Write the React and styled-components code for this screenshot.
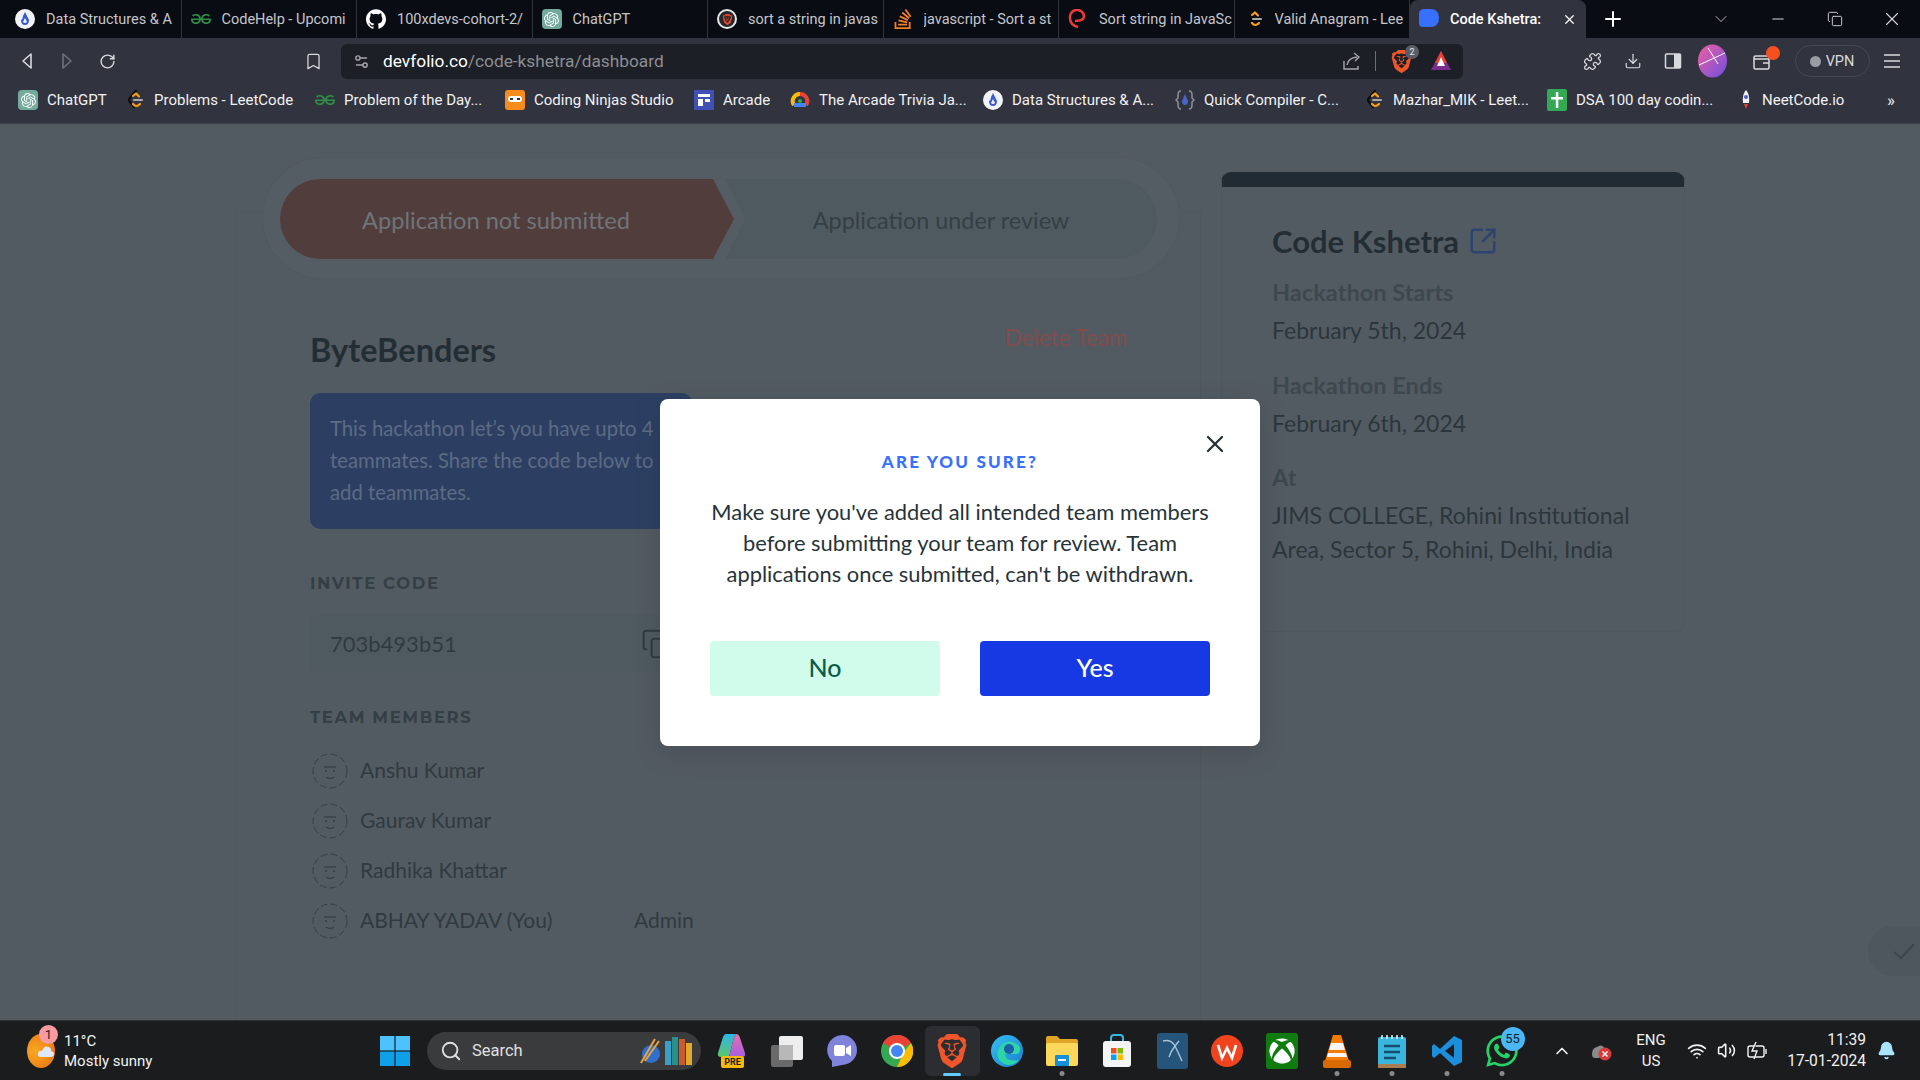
import React from 'react';
import styled, { createGlobalStyle } from 'styled-components';
import {
  Bell, Bookmark, ChevronDown, ChevronUp, Copy, Download, Minus, Plus, Puzzle, RotateCw,
  Search, Settings2, SquareArrowOutUpRight, Volume2, Wifi, X,
} from 'lucide-react';
import {
  SiBrave, SiGeeksforgeeks, SiGithub, SiOpenai, SiStackoverflow,
} from 'react-icons/si';
import { FaWhatsapp, FaXbox } from 'react-icons/fa';

const GlobalStyle = createGlobalStyle`
  html, body { margin: 0; padding: 0; height: 100%; overflow: hidden; }
  body { background: #535b62; font-family: "Lato", "Liberation Sans", sans-serif; }
  * { box-sizing: border-box; }
`;

const Screen = styled.div`
  width: 1920px;
  height: 1080px;
  display: flex;
  flex-direction: column;
  position: relative;
  overflow: hidden;
`;

/* browser chrome */
const TabStrip = styled.div`
  height: 38px;
  flex: none;
  display: flex;
  align-items: stretch;
  padding-left: 6px;
  background: #0a0c14;
  font-family: "Roboto", sans-serif;
  font-size: 14.5px;
`;

const Tab = styled.div`
  width: ${(p) => (p.$active ? 176 : 175.5)}px;
  flex: none;
  display: flex;
  align-items: center;
  gap: 11px;
  padding: 0 ${(p) => (p.$active ? 8 : 0)}px 0 9px;
  color: ${(p) => (p.$active ? '#fff' : '#c4c6cb')};
  background: ${(p) => (p.$active ? '#31343f' : 'transparent')};
  border-right: 1px solid ${(p) => (p.$active ? 'transparent' : '#33353d')};
  border-radius: ${(p) => (p.$active ? '8px 8px 0 0' : '0')};
  font-weight: ${(p) => (p.$active ? 500 : 400)};
`;

const TabTitle = styled.span`
  flex: 1;
  overflow: hidden;
  white-space: nowrap;
`;

const TabActions = styled.div`
  display: flex;
  align-items: center;
  color: #fff;
  margin-left: 15px;
`;

const WindowButtons = styled.div`
  display: flex;
  align-items: center;
  margin-left: auto;
  color: #d6d7da;
`;

const WindowButton = styled.div`
  width: 57px;
  display: flex;
  justify-content: center;
`;

const Toolbar = styled.div`
  height: 46px;
  flex: none;
  display: flex;
  align-items: center;
  padding-left: 7px;
  background: #31343f;
  color: #d8d9dc;
`;

const ToolButton = styled.div`
  width: 40px;
  height: 36px;
  flex: none;
  position: relative;
  display: flex;
  align-items: center;
  justify-content: center;
  color: ${(p) => (p.$dim ? '#6f727b' : 'inherit')};
  margin-left: ${(p) => p.$gap || 0}px;
`;

const AddressBar = styled.div`
  width: 1122px;
  height: 35px;
  flex: none;
  margin-left: 8px;
  padding: 0 2px 0 12px;
  display: flex;
  align-items: center;
  border-radius: 6px;
  background: #1d1f26;
  color: #a5a7ad;
`;

const Url = styled.div`
  flex: 1;
  margin-left: 13px;
  font-family: "Roboto", sans-serif;
  font-size: 17.3px;
  color: #8c8e94;
  b { color: #fff; font-weight: 400; }
`;

const Divider = styled.div`
  width: 1px;
  height: 20px;
  background: #6c6e76;
  margin: 0 5px 0 3px;
`;

const CountBadge = styled.span`
  position: absolute;
  top: 2px;
  right: 2px;
  width: 14px;
  height: 14px;
  border-radius: 50%;
  background: #5b5d66;
  color: #e7e7e7;
  font-family: "Roboto", sans-serif;
  font-size: 9px;
  text-align: center;
  line-height: 14px;
`;

const NotifyDot = styled.span`
  position: absolute;
  top: 3px;
  right: 2px;
  width: 14px;
  height: 14px;
  border-radius: 50%;
  background: #f4511e;
`;

const VpnPill = styled.div`
  width: 75px;
  height: 32px;
  flex: none;
  margin-left: 13px;
  border-radius: 16px;
  border: 1px solid #454852;
  display: flex;
  align-items: center;
  justify-content: center;
  gap: 5px;
  font-family: "Roboto", sans-serif;
  font-size: 14.5px;
  color: #d8d9dc;
`;

const VpnDot = styled.span`
  width: 11px;
  height: 11px;
  border-radius: 50%;
  background: #9a9ca4;
`;

const BookmarkBar = styled.div`
  height: 40px;
  flex: none;
  display: flex;
  align-items: center;
  padding: 0 0 7px 18px;
  background: #31343f;
  border-bottom: 1px solid #3e414b;
  font-family: "Roboto", sans-serif;
  font-size: 15px;
  color: #f1f1f3;
`;

const BookmarkItem = styled.div`
  width: ${(p) => p.$width}px;
  flex: none;
  display: flex;
  align-items: center;
  gap: 9px;
  white-space: nowrap;
`;

const MoreMarks = styled.div`
  margin-left: 28px;
  font-size: 17px;
`;

/* favicons */
const Fav = styled.div`
  width: ${(p) => p.$size || 20}px;
  height: ${(p) => p.$size || 20}px;
  flex: none;
  display: flex;
  align-items: center;
  justify-content: center;
  font-size: ${(p) => p.$size || 20}px;
  color: ${(p) => p.$color || 'inherit'};
`;

const RingFav = styled(Fav)`
  border: 2px solid #e6e6e6;
  border-radius: 50%;
  background: #26272c;
  font-size: 11px;
`;

const GptTile = styled.div`
  width: 20px;
  height: 20px;
  flex: none;
  border-radius: 4px;
  background: #74aa9c;
  color: #fff;
  display: flex;
  align-items: center;
  justify-content: center;
  font-size: 15px;
`;

const DsaIcon = () => (
  <svg width="20" height="20" viewBox="0 0 20 20">
    <circle cx="10" cy="10" r="10" fill="#f2f3f8" />
    <path d="M10 3 L14 11 Q14 16 10 16 Q6 16 6 11 Q8 10 8 7 Z" fill="#3a5bd0" />
    <path d="M10 9 L12 13 Q10 15 8 13 Z" fill="#f2f3f8" />
  </svg>
);

const LeetIcon = () => (
  <svg width="20" height="22" viewBox="0 0 20 22" fill="none" strokeLinecap="round">
    <path d="M11 2 L5 9 Q3 11 5 13 L9 18" stroke="#0c0c0c" strokeWidth="2.2" />
    <path d="M8 7 L11 4.5 M14 7.5 L11.5 5" stroke="#f89f1b" strokeWidth="2.2" />
    <path d="M9 11 H17" stroke="#a8a8a8" strokeWidth="2.2" />
    <path d="M8 15 Q11 19 15 15" stroke="#f89f1b" strokeWidth="2.2" />
  </svg>
);

const NinjaIcon = () => (
  <svg width="20" height="20" viewBox="0 0 20 20">
    <rect width="20" height="20" rx="3" fill="#f78c1e" />
    <rect x="3" y="6" width="14" height="6" rx="3" fill="#fff" />
    <rect x="5" y="8" width="3" height="2" fill="#333" />
    <rect x="12" y="8" width="3" height="2" fill="#333" />
  </svg>
);

const ArcadeIcon = () => (
  <svg width="20" height="20" viewBox="0 0 20 20">
    <rect width="20" height="20" fill="#3f51b5" />
    <rect x="4" y="4" width="12" height="3" fill="#fff" />
    <rect x="4" y="9" width="5" height="7" fill="#fff" />
    <rect x="11" y="9" width="5" height="3" fill="#fff" />
  </svg>
);

const TriviaIcon = () => (
  <svg width="20" height="20" viewBox="0 0 20 20" fill="none" strokeWidth="4">
    <path d="M4 15 A7 7 0 0 1 10 4" stroke="#fbbc04" />
    <path d="M10 4 A7 7 0 0 1 16 15" stroke="#ea4335" />
    <path d="M4 15 L16 15" stroke="#4285f4" />
    <circle cx="10" cy="11" r="2" fill="#34a853" stroke="none" />
  </svg>
);

const QuickIcon = () => (
  <svg width="20" height="22" viewBox="0 0 20 22" fill="none" stroke="#8c8fa0" strokeWidth="1.5">
    <path d="M6 2 Q3 2 3 6 V9 L1 11 L3 13 V16 Q3 20 6 20" />
    <path d="M14 2 Q17 2 17 6 V9 L19 11 L17 13 V16 Q17 20 14 20" />
    <path d="M10 5 L13 12 Q13 16 10 16 Q7 16 7 12 Z" fill="#4a63c8" stroke="none" />
  </svg>
);

const SheetIcon = () => (
  <svg width="20" height="22" viewBox="0 0 20 22">
    <rect width="20" height="22" rx="2" fill="#34a853" />
    <rect x="4" y="8" width="12" height="2.5" fill="#fff" />
    <rect x="8.8" y="3" width="2.5" height="16" fill="#fff" />
  </svg>
);

const RocketIcon = () => (
  <svg width="14" height="22" viewBox="0 0 14 22">
    <path d="M7 1 Q11 5 10 14 H4 Q3 5 7 1 Z" fill="#f1f1f3" />
    <circle cx="7" cy="8" r="2" fill="#4a63c8" />
    <path d="M5 15 H9 L7 20 Z" fill="#ea4335" />
  </svg>
);

const CodeKshetraIcon = () => (
  <svg width="20" height="22" viewBox="0 0 20 22">
    <path d="M0 6 Q0 1 6 1 H11 Q20 1 20 10 Q20 19 11 19 H4 Q0 19 0 15 Z" fill="#3770ff" />
  </svg>
);

const CodeforSpinner = () => (
  <svg width="20" height="20" viewBox="0 0 20 20" fill="none" stroke="#ef3b36" strokeWidth="2.5">
    <path d="M10 18 Q2 16 2 9 A7 7 0 0 1 16 7 Q16 12 7 12" />
  </svg>
);

const BackIcon = ({ flip }) => (
  <svg width="16" height="20" viewBox="0 0 16 20" fill="none" stroke="currentColor" strokeWidth="1.6" strokeLinejoin="round">
    <path d={flip ? 'M4 3 L12 10 L4 17 Z' : 'M12 3 L4 10 L12 17 Z'} />
  </svg>
);

const ShareIcon = () => (
  <svg width="20" height="20" viewBox="0 0 20 20" fill="none" stroke="currentColor" strokeWidth="1.4">
    <path d="M2 10 V18 H16 V15" />
    <path d="M5 14 Q6 7 15 6" />
    <path d="M12 2 L17 6 L13 10" />
  </svg>
);

const SidePanelIcon = () => (
  <svg width="18" height="18" viewBox="0 0 18 18">
    <rect x="1.5" y="2" width="15" height="14" rx="1" fill="none" stroke="currentColor" strokeWidth="1.5" />
    <rect x="10" y="2" width="6.5" height="14" fill="currentColor" />
  </svg>
);

const AccountIcon = () => (
  <svg width="29" height="34" viewBox="0 0 29 34">
    <defs>
      <linearGradient id="acc" x1="0" y1="0" x2="1" y2="1">
        <stop offset="0" stopColor="#f05fa0" />
        <stop offset="1" stopColor="#6f4fe0" />
      </linearGradient>
    </defs>
    <ellipse cx="14.5" cy="17" rx="14.5" ry="16.5" fill="url(#acc)" />
    <path d="M1 21 L27 9 M10 4 L20 20" stroke="#fff" strokeWidth="1" />
  </svg>
);

const WalletIcon = () => (
  <svg width="20" height="20" viewBox="0 0 20 20" fill="none" stroke="currentColor" strokeWidth="1.5">
    <rect x="2" y="5" width="15" height="13" rx="1.5" />
    <path d="M2 8 H17 M11 12 H17" />
  </svg>
);

const MenuIcon = () => (
  <svg width="18" height="16" viewBox="0 0 18 16" stroke="currentColor" strokeWidth="1.6">
    <path d="M1 2 H17 M1 8 H17 M1 14 H17" />
  </svg>
);

const BatTriangle = () => (
  <svg width="22" height="22" viewBox="0 0 22 22">
    <path d="M11 1 L21 20 H1 Z" fill="#7b2d8b" />
    <path d="M11 1 L17 13 H5 Z" fill="#e8412e" />
    <path d="M11 7 L15 16 H7 Z" fill="#fff" />
  </svg>
);

/* page behind the modal */
const Page = styled.main`
  flex: 1;
  min-height: 0;
  background: #535b62;
  display: flex;
  padding-left: 235px;
  align-items: flex-start;
`;

const LeftPanel = styled.section`
  width: 966px;
  height: 808px;
  flex: none;
  margin-top: 88px;
  padding-left: 27px;
  border: 1px solid #4f585e;
  border-bottom: none;
`;

const StepperShell = styled.div`
  width: 916px;
  height: 120px;
  margin-top: -55px;
  padding: 21px 21px 0 17px;
  display: flex;
  align-items: flex-start;
  border-radius: 60px;
  background: #555d64;
  box-shadow: 0 0 0 1px #51595f;
`;

const StepOne = styled.div`
  width: 454px;
  height: 80px;
  flex: none;
  display: flex;
  align-items: center;
  justify-content: center;
  padding: 2px 22px 0 0;
  border-radius: 40px 0 0 40px;
  background: #513e3c;
  color: #6f7479;
  font-size: 23.6px;
  clip-path: polygon(0 0, 433px 0, 100% 50%, 433px 100%, 0 100%);
`;

const StepTwo = styled.div`
  width: 432px;
  height: 80px;
  flex: none;
  margin-left: -9px;
  padding-top: 2px;
  display: flex;
  align-items: center;
  justify-content: center;
  border-radius: 0 40px 40px 0;
  background: #4f5a60;
  color: #343f45;
  font-size: 23.4px;
  clip-path: polygon(0 0, 100% 0, 100% 100%, 0 100%, 20px 50%);
`;

const TeamBlock = styled.div`
  width: 817px;
  margin-left: 47px;
  margin-top: 37px;
`;

const TeamHeader = styled.div`
  display: flex;
  justify-content: space-between;
  align-items: flex-start;
  height: 78px;
`;

const TeamName = styled.h1`
  margin: 15px 0 0;
  font-size: 32.5px;
  line-height: 40px;
  font-weight: 700;
  color: #232e34;
`;

const DeleteLink = styled.div`
  margin-top: 9px;
  font-size: 22.4px;
  line-height: 28px;
  color: #804c4c;
`;

const InfoBox = styled.div`
  width: 382px;
  height: 136px;
  padding: 19px 20px;
  border-radius: 10px;
  background: #2c3f63;
  color: #5d6b83;
  font-size: 20.3px;
  line-height: 32px;
`;

const SectionLabel = styled.div`
  margin-top: ${(p) => p.$top}px;
  font-family: "Montserrat", "Open Sans", sans-serif;
  font-size: 16.5px;
  line-height: 20px;
  font-weight: 700;
  letter-spacing: 1.6px;
  color: #343f45;
`;

const CodeBox = styled.div`
  width: 382px;
  height: 57px;
  margin-top: 22px;
  padding-left: 20px;
  padding-right: 19px;
  display: flex;
  align-items: center;
  justify-content: space-between;
  border-radius: 6px;
  background: #4f5a60;
  color: #2f3a40;
  font-size: 22px;
`;

const MemberList = styled.ul`
  list-style: none;
  margin: 19px 0 0;
  padding: 0;
`;

const Member = styled.li`
  height: 50px;
  display: flex;
  align-items: center;
  color: #2f3a40;
  font-size: 21px;
`;

const MemberName = styled.span`
  width: 274px;
  margin-left: 12px;
  padding-bottom: 3px;
  white-space: nowrap;
`;

const AdminTag = styled.span`
  padding-bottom: 3px;
`;

const AvatarFace = styled.svg`
  margin-left: 2px;
  flex: none;
`;

const Avatar = () => (
  <AvatarFace width="36" height="36" viewBox="0 0 36 36" fill="none" stroke="#343f45">
    <circle cx="18" cy="18" r="17" strokeDasharray="7 3" strokeWidth="1" />
    <path d="M12 14 H24" strokeWidth="1.2" />
    <path d="M13 18 H15 M21 18 H23" strokeWidth="1.6" />
    <path d="M14 24 Q18 27 22 24" strokeWidth="1.2" />
  </AvatarFace>
);

const EventCard = styled.aside`
  width: 464px;
  height: 460px;
  flex: none;
  margin-top: 48px;
  margin-left: 20px;
  padding: 36px 50px 0;
  border: 1px solid #4f585e;
  border-top: 15px solid #212b33;
  border-radius: 10px;
  background: #535b62;
`;

const EventTitle = styled.h2`
  margin: 0;
  display: flex;
  align-items: center;
  gap: 9px;
  font-size: 31px;
  line-height: 36px;
  font-weight: 700;
  color: #232e34;
  svg { color: #2c4570; }
`;

const EventLabel = styled.div`
  margin-top: ${(p) => p.$top}px;
  font-size: 23.6px;
  line-height: 28px;
  font-weight: 700;
  color: #3d484e;
`;

const EventValue = styled.div`
  margin-top: 7px;
  font-size: 23px;
  line-height: 34px;
  color: #2b363c;
`;

const CheckPill = styled.div`
  position: absolute;
  right: 0;
  top: 926px;
  width: 52px;
  height: 50px;
  padding-left: 24px;
  display: flex;
  align-items: center;
  border-radius: 25px 0 0 25px;
  background: #4d575d;
  color: #3b464c;
`;

/* modal */
const Modal = styled.div`
  position: absolute;
  left: 660px;
  top: 399px;
  width: 600px;
  height: 347px;
  padding: 52px 50px 0;
  border-radius: 8px;
  background: #fff;
  box-shadow: 0 6px 24px rgba(40, 46, 52, 0.25);
  display: flex;
  flex-direction: column;
  align-items: center;
`;

const CloseButton = styled.div`
  position: absolute;
  top: 31px;
  right: 31px;
  color: #273339;
  display: flex;
`;

const ModalTitle = styled.div`
  font-size: 17px;
  line-height: 22px;
  font-weight: 900;
  letter-spacing: 2.2px;
  color: #3770ff;
`;

const ModalBody = styled.p`
  margin: 23px 0 0;
  width: 520px;
  text-align: center;
  font-size: 21.9px;
  line-height: 31px;
  color: #273339;
`;

const ModalActions = styled.div`
  width: 500px;
  margin-top: 52px;
  display: flex;
  justify-content: space-between;
`;

const ModalButton = styled.button`
  width: 230px;
  height: 55px;
  padding: 0 0 4px;
  border: none;
  border-radius: 4px;
  font-family: inherit;
  font-size: 25px;
  font-weight: 500;
  background: ${(p) => (p.$primary ? '#1639e4' : '#d1fcec')};
  color: ${(p) => (p.$primary ? '#fff' : '#0a5c4a')};
`;

/* taskbar */
const Taskbar = styled.footer`
  height: 60px;
  flex: none;
  display: flex;
  align-items: center;
  background: #1b1c1e;
  border-top: 1px solid #2f3134;
  font-family: "Roboto", sans-serif;
  color: #f2f2f2;
`;

const Weather = styled.div`
  width: 367px;
  flex: none;
  padding-left: 27px;
  display: flex;
  align-items: center;
  gap: 9px;
  font-size: 15px;
  line-height: 20px;
`;

const WeatherIcon = styled.div`
  width: 28px;
  height: 34px;
  position: relative;
  flex: none;
  border-radius: 50%;
  background: radial-gradient(circle at 30% 50%, #f9a825, #e8710a);
  display: flex;
  align-items: center;
  justify-content: flex-end;
`;

const WeatherBadge = styled.span`
  position: absolute;
  top: -9px;
  left: 12px;
  width: 19px;
  height: 19px;
  border-radius: 50%;
  background: #f99aa2;
  color: #222;
  font-size: 13px;
  line-height: 19px;
  text-align: center;
`;

const SearchPill = styled.div`
  width: 274px;
  height: 38px;
  flex: none;
  margin: 0 3.5px 0 5px;
  padding: 0 6px 0 13px;
  display: flex;
  align-items: center;
  gap: 10px;
  border-radius: 19px;
  background: #3a3b3d;
  color: #e0e0e0;
  font-size: 16.5px;
`;

const SearchArt = styled.div`
  margin-left: auto;
  display: flex;
`;

const AppSlot = styled.div`
  width: 55px;
  height: 50px;
  flex: none;
  position: relative;
  display: flex;
  align-items: center;
  justify-content: center;
  border-radius: 6px;
  background: ${(p) => (p.$active ? '#2c2d30' : 'transparent')};
  font-size: 32px;
`;

const RunDot = styled.span`
  position: absolute;
  bottom: 0;
  left: 50%;
  height: ${(p) => (p.$active ? 3 : 5)}px;
  width: ${(p) => (p.$active ? 18 : 5)}px;
  transform: translateX(-50%);
  border-radius: 3px;
  background: ${(p) => (p.$active ? '#60cdff' : '#8a8a8a')};
`;

const AppBadge = styled.span`
  position: absolute;
  top: 1px;
  right: 5px;
  width: 24px;
  height: 24px;
  border-radius: 50%;
  background: #4bb8f5;
  color: #10222e;
  font-size: 13px;
  line-height: 24px;
  text-align: center;
`;

const Tray = styled.div`
  margin-left: auto;
  padding-right: 14px;
  display: flex;
  align-items: center;
  color: #f2f2f2;
`;

const TraySlot = styled.div`
  width: ${(p) => p.$width}px;
  display: flex;
  justify-content: center;
  text-align: center;
  font-size: 15px;
  line-height: 21px;
`;

const Clock = styled.div`
  width: 92px;
  text-align: right;
  font-size: 15.6px;
  line-height: 21px;
`;

const StartIcon = () => (
  <svg width="30" height="30" viewBox="0 0 30 30">
    <rect width="14.4" height="14.4" fill="#4cc2ff" />
    <rect x="15.6" width="14.4" height="14.4" fill="#4cc2ff" />
    <rect y="15.6" width="14.4" height="14.4" fill="#0fa0e8" />
    <rect x="15.6" y="15.6" width="14.4" height="14.4" fill="#0fa0e8" />
  </svg>
);

const CloudIcon = () => (
  <svg width="18" height="14" viewBox="0 0 18 14">
    <path d="M4 13 Q0 13 1 9 Q2 6 5 7 Q7 1 12 3 Q15 5 14 7 Q18 8 17 11 Q16 13 14 13 Z" fill="#dfe9f5" />
  </svg>
);

const BooksIcon = () => (
  <svg width="58" height="32" viewBox="0 0 58 32">
    <circle cx="14" cy="19" r="9" fill="#2f6fd0" />
    <path d="M4 28 L18 4" stroke="#e8a33d" strokeWidth="2" />
    <path d="M8 26 L22 6" stroke="#e8a33d" strokeWidth="2" />
    <rect x="28" y="6" width="6" height="24" fill="#3aa0c8" />
    <rect x="35" y="2" width="6" height="28" fill="#2d8f8a" />
    <rect x="42" y="4" width="6" height="26" fill="#c95c2e" />
    <rect x="49" y="8" width="6" height="22" fill="#e0a92e" />
  </svg>
);

const CopilotIcon = () => (
  <svg width="34" height="36" viewBox="0 0 34 36">
    <defs>
      <linearGradient id="cpA" x1="0" y1="0" x2="0" y2="1">
        <stop offset="0" stopColor="#2fb5e8" />
        <stop offset="1" stopColor="#5cc56a" />
      </linearGradient>
      <linearGradient id="cpB" x1="0" y1="0" x2="0" y2="1">
        <stop offset="0" stopColor="#e86fb0" />
        <stop offset="1" stopColor="#a45fe0" />
      </linearGradient>
    </defs>
    <path d="M11 1 H21 Q18 6 17 12 L14 24 H6 Q2 24 3 20 L8 4 Q9 1 11 1 Z" fill="url(#cpA)" />
    <path d="M21 1 Q24 1 25 5 L30 20 Q31 24 27 24 H14 L17 12 Q18 6 21 1 Z" fill="url(#cpB)" />
    <rect x="6" y="23" width="23" height="12" rx="2" fill="#f6b90c" />
    <text x="17.5" y="32" fontSize="9" fontWeight="700" textAnchor="middle" fill="#222" fontFamily="Roboto">PRE</text>
  </svg>
);

const FilesIcon = () => (
  <svg width="32" height="32" viewBox="0 0 32 32">
    <rect y="10" width="22" height="22" rx="2" fill="#6a6a6a" />
    <rect x="8" y="1" width="24" height="24" rx="2" fill="#eeeeee" />
    <rect x="8" y="10" width="14" height="15" fill="#b8b8b8" />
  </svg>
);

const MeetIcon = () => (
  <svg width="32" height="34" viewBox="0 0 32 34">
    <path d="M16 1 A15 15 0 1 1 16 31 L6 33 L6 27 A15 15 0 0 1 16 1 Z" fill="#7f83dc" />
    <rect x="8" y="11" width="11" height="11" rx="2" fill="#fff" />
    <path d="M20 14 L25 11 V22 L20 19 Z" fill="#fff" />
  </svg>
);

const ChromeIcon = () => (
  <svg width="32" height="32" viewBox="0 0 32 32">
    <circle cx="16" cy="16" r="16" fill="#34a853" />
    <path d="M16 0 A16 16 0 0 1 30 8 L16 16 L2 8 A16 16 0 0 1 16 0 Z" fill="#ea4335" />
    <path d="M30 8 A16 16 0 0 1 16 32 L23 17 Z" fill="#fbbc04" />
    <circle cx="16" cy="16" r="8" fill="#fff" />
    <circle cx="16" cy="16" r="6" fill="#4285f4" />
  </svg>
);

const EdgeIcon = () => (
  <svg width="32" height="34" viewBox="0 0 32 34">
    <defs>
      <linearGradient id="ed" x1="0" y1="0" x2="1" y2="1">
        <stop offset="0" stopColor="#35c1f1" />
        <stop offset="1" stopColor="#1b7fcf" />
      </linearGradient>
    </defs>
    <circle cx="16" cy="17" r="16" fill="url(#ed)" />
    <path d="M8 14 Q16 2 28 12 Q31 18 26 20 H14 Q14 28 28 26 Q18 36 8 26 Q5 20 8 14 Z" fill="#2fd4a7" />
    <circle cx="18" cy="15" r="5" fill="#1b5fa8" />
  </svg>
);

const FolderIcon = () => (
  <svg width="34" height="32" viewBox="0 0 34 32">
    <path d="M1 3 Q1 1 3 1 H12 L15 4 H31 Q33 4 33 6 V10 H1 Z" fill="#e0a526" />
    <rect x="1" y="8" width="32" height="23" rx="2" fill="#fbd75b" />
    <rect x="10" y="20" width="14" height="11" rx="1" fill="#1490d8" />
    <rect x="13" y="24" width="8" height="2" fill="#e9f6ff" />
  </svg>
);

const StoreIcon = () => (
  <svg width="30" height="34" viewBox="0 0 30 34">
    <path d="M9 8 V4 Q9 1 12 1 H18 Q21 1 21 4 V8" fill="none" stroke="#35b8e8" strokeWidth="2" />
    <rect x="1" y="7" width="28" height="26" rx="3" fill="#f4f4f4" />
    <rect x="9" y="14" width="5.5" height="5.5" fill="#f25022" />
    <rect x="15.5" y="14" width="5.5" height="5.5" fill="#7fba00" />
    <rect x="9" y="20.5" width="5.5" height="5.5" fill="#00a4ef" />
    <rect x="15.5" y="20.5" width="5.5" height="5.5" fill="#ffb900" />
  </svg>
);

const MysqlIcon = () => (
  <svg width="31" height="36" viewBox="0 0 31 36">
    <rect width="31" height="36" rx="3" fill="#26557c" />
    <path d="M6 8 Q14 6 18 13 Q21 19 25 28 M18 13 Q14 18 12 24 M18 13 L22 8" fill="none" stroke="#a9c4d8" strokeWidth="1.4" />
  </svg>
);

const WpsIcon = () => (
  <svg width="32" height="32" viewBox="0 0 32 32">
    <circle cx="16" cy="16" r="16" fill="#f0431e" />
    <path d="M7 10 L11 23 L16 13 L21 23 L25 10" fill="none" stroke="#fff" strokeWidth="2.6" />
  </svg>
);

const XboxTile = styled.div`
  width: 32px;
  height: 36px;
  border-radius: 3px;
  background: #107c10;
  color: #fff;
  display: flex;
  align-items: center;
  justify-content: center;
  font-size: 26px;
`;

const VlcIcon = () => (
  <svg width="30" height="36" viewBox="0 0 30 36">
    <path d="M11 2 H19 L27 28 H3 Z" fill="#f57c00" />
    <path d="M9 10 H21 L23 17 H7 Z" fill="#f5f5f5" />
    <path d="M6 20 H24 L25 24 H5 Z" fill="#f5f5f5" />
    <rect x="1" y="27" width="28" height="8" rx="2" fill="#d96a00" />
  </svg>
);

const NotepadIcon = () => (
  <svg width="28" height="34" viewBox="0 0 28 34">
    <rect y="3" width="28" height="31" rx="2" fill="#3ab6de" />
    <path d="M4 1 V5 M9 1 V5 M14 1 V5 M19 1 V5 M24 1 V5" stroke="#d8eef6" strokeWidth="1.6" />
    <path d="M6 12 H22 M6 18 H22 M6 24 H18" stroke="#14506b" strokeWidth="2.4" />
    <rect y="30" width="28" height="4" fill="#a97d4d" />
  </svg>
);

const VscodeIcon = () => (
  <svg width="32" height="32" viewBox="0 0 32 32">
    <path d="M23 1 L31 5 V27 L23 31 L9 18 L3 23 L1 21 V11 L3 9 L9 14 Z M23 9 L14 16 L23 23 Z" fill="#1b8fdc" fillRule="evenodd" />
  </svg>
);

const CloudOff = () => (
  <svg width="24" height="22" viewBox="0 0 24 22">
    <path d="M3 14 Q3 8 8 7 Q13 3 16 9 Q14 16 10 18 H6 Q3 18 3 14 Z" fill="#8a8a8a" />
    <circle cx="16" cy="14" r="6.5" fill="#d83b3b" />
    <path d="M13.5 11.5 L18.5 16.5 M18.5 11.5 L13.5 16.5" stroke="#fff" strokeWidth="1.4" />
  </svg>
);

const BatteryIcon = () => (
  <svg width="22" height="20" viewBox="0 0 22 20" fill="none" stroke="currentColor" strokeWidth="1.4">
    <rect x="2" y="5" width="16" height="11" rx="2" />
    <path d="M20 8 V13" />
    <path d="M10 1 L6 10 H11 L8 18" fill="#1b1c1e" />
  </svg>
);

const tabs = [
  { title: 'Data Structures & A', icon: <DsaIcon /> },
  { title: 'CodeHelp - Upcomi', icon: <Fav $color="#2f8d46"><SiGeeksforgeeks /></Fav> },
  { title: '100xdevs-cohort-2/', icon: <Fav $color="#fff"><SiGithub /></Fav> },
  { title: 'ChatGPT', icon: <GptTile><SiOpenai /></GptTile> },
  { title: 'sort a string in javas', icon: <RingFav $color="#e0492e"><SiBrave /></RingFav> },
  { title: 'javascript - Sort a st', icon: <Fav $color="#f48024"><SiStackoverflow /></Fav> },
  { title: 'Sort string in JavaSc', icon: <CodeforSpinner /> },
  { title: 'Valid Anagram - Lee', icon: <LeetIcon /> },
];

const marks = [
  { label: 'ChatGPT', width: 107, icon: <GptTile><SiOpenai /></GptTile> },
  { label: 'Problems - LeetCode', width: 190, icon: <LeetIcon /> },
  { label: 'Problem of the Day...', width: 190, icon: <Fav $color="#2f8d46"><SiGeeksforgeeks /></Fav> },
  { label: 'Coding Ninjas Studio', width: 189, icon: <NinjaIcon /> },
  { label: 'Arcade', width: 96, icon: <ArcadeIcon /> },
  { label: 'The Arcade Trivia Ja...', width: 193, icon: <TriviaIcon /> },
  { label: 'Data Structures & A...', width: 192, icon: <DsaIcon /> },
  { label: 'Quick Compiler - C...', width: 189, icon: <QuickIcon /> },
  { label: 'Mazhar_MIK - Leet...', width: 183, icon: <LeetIcon /> },
  { label: 'DSA 100 day codin...', width: 192, icon: <SheetIcon /> },
  { label: 'NeetCode.io', width: 120, icon: <RocketIcon /> },
];

const members = ['Anshu Kumar', 'Gaurav Kumar', 'Radhika Khattar', 'ABHAY YADAV (You)'];

const apps = [
  { id: 'copilot', icon: <CopilotIcon /> },
  { id: 'files', icon: <FilesIcon /> },
  { id: 'meet', icon: <MeetIcon /> },
  { id: 'chrome', icon: <ChromeIcon /> },
  { id: 'brave', icon: <Fav $size={34} $color="#f0552b"><SiBrave /></Fav>, active: true },
  { id: 'edge', icon: <EdgeIcon /> },
  { id: 'folder', icon: <FolderIcon />, running: true },
  { id: 'store', icon: <StoreIcon /> },
  { id: 'mysql', icon: <MysqlIcon /> },
  { id: 'wps', icon: <WpsIcon /> },
  { id: 'xbox', icon: <XboxTile><FaXbox /></XboxTile> },
  { id: 'vlc', icon: <VlcIcon />, running: true },
  { id: 'notepad', icon: <NotepadIcon />, running: true },
  { id: 'vscode', icon: <VscodeIcon />, running: true },
  { id: 'whatsapp', icon: <Fav $size={36} $color="#25d366"><FaWhatsapp /></Fav>, running: true, badge: '55' },
];

const App = () => (
  <Screen>
    <GlobalStyle />
    <TabStrip>
      {tabs.map((tab) => (
        <Tab key={tab.title}>
          {tab.icon}
          <TabTitle>{tab.title}</TabTitle>
        </Tab>
      ))}
      <Tab $active>
        <CodeKshetraIcon />
        <TabTitle>Code Kshetra:</TabTitle>
        <X size={15} />
      </Tab>
      <TabActions><Plus size={24} /></TabActions>
      <WindowButtons>
        <WindowButton><ChevronDown size={20} strokeWidth={1} /></WindowButton>
        <WindowButton><Minus size={18} strokeWidth={1.4} /></WindowButton>
        <WindowButton><Copy size={16} strokeWidth={1.4} /></WindowButton>
        <WindowButton><X size={22} strokeWidth={1.2} /></WindowButton>
      </WindowButtons>
    </TabStrip>

    <Toolbar>
      <ToolButton><BackIcon /></ToolButton>
      <ToolButton $dim><BackIcon flip /></ToolButton>
      <ToolButton><RotateCw size={17} /></ToolButton>
      <ToolButton $gap={166}><Bookmark size={19} strokeWidth={1.6} /></ToolButton>
      <AddressBar>
        <Settings2 size={17} />
        <Url><b>devfolio.co</b>/code-kshetra/dashboard</Url>
        <ToolButton><ShareIcon /></ToolButton>
        <Divider />
        <ToolButton>
          <Fav $size={23} $color="#f0552b"><SiBrave /></Fav>
          <CountBadge>2</CountBadge>
        </ToolButton>
        <ToolButton><BatTriangle /></ToolButton>
      </AddressBar>
      <ToolButton $gap={109.5}><Puzzle size={19} strokeWidth={1.6} /></ToolButton>
      <ToolButton><Download size={18} strokeWidth={1.6} /></ToolButton>
      <ToolButton><SidePanelIcon /></ToolButton>
      <ToolButton><AccountIcon /></ToolButton>
      <ToolButton $gap={9}>
        <WalletIcon />
        <NotifyDot />
      </ToolButton>
      <VpnPill>
        <VpnDot />
        VPN
      </VpnPill>
      <ToolButton $gap={2}><MenuIcon /></ToolButton>
    </Toolbar>

    <BookmarkBar>
      {marks.map((mark) => (
        <BookmarkItem key={mark.label} $width={mark.width}>
          {mark.icon}
          {mark.label}
        </BookmarkItem>
      ))}
      <MoreMarks>»</MoreMarks>
    </BookmarkBar>

    <Page>
      <LeftPanel>
        <StepperShell>
          <StepOne>Application not submitted</StepOne>
          <StepTwo>Application under review</StepTwo>
        </StepperShell>
        <TeamBlock>
          <TeamHeader>
            <TeamName>ByteBenders</TeamName>
            <DeleteLink>Delete Team</DeleteLink>
          </TeamHeader>
          <InfoBox>
            This hackathon let’s you have upto 4 teammates. Share the code below to add teammates.
          </InfoBox>
          <SectionLabel $top={44}>INVITE CODE</SectionLabel>
          <CodeBox>
            703b493b51
            <Copy size={32} strokeWidth={1.5} />
          </CodeBox>
          <SectionLabel $top={35}>TEAM MEMBERS</SectionLabel>
          <MemberList>
            {members.map((name) => (
              <Member key={name}>
                <Avatar />
                <MemberName>{name}</MemberName>
                {name.includes('You') && <AdminTag>Admin</AdminTag>}
              </Member>
            ))}
          </MemberList>
        </TeamBlock>
      </LeftPanel>

      <EventCard>
        <EventTitle>
          Code Kshetra
          <SquareArrowOutUpRight size={30} strokeWidth={2} />
        </EventTitle>
        <EventLabel $top={19}>Hackathon Starts</EventLabel>
        <EventValue>February 5th, 2024</EventValue>
        <EventLabel $top={24}>Hackathon Ends</EventLabel>
        <EventValue>February 6th, 2024</EventValue>
        <EventLabel $top={23}>At</EventLabel>
        <EventValue>JIMS COLLEGE, Rohini Institutional Area, Sector 5, Rohini, Delhi, India</EventValue>
      </EventCard>
    </Page>

    <Taskbar>
      <Weather>
        <WeatherIcon>
          <CloudIcon />
          <WeatherBadge>1</WeatherBadge>
        </WeatherIcon>
        <div>
          11°C
          <br />
          Mostly sunny
        </div>
      </Weather>
      <AppSlot><StartIcon /></AppSlot>
      <SearchPill>
        <Search size={22} />
        Search
        <SearchArt><BooksIcon /></SearchArt>
      </SearchPill>
      {apps.map((app) => (
        <AppSlot key={app.id} $active={app.active}>
          {app.icon}
          {app.badge && <AppBadge>{app.badge}</AppBadge>}
          {(app.running || app.active) && <RunDot $active={app.active} />}
        </AppSlot>
      ))}
      <Tray>
        <TraySlot $width={40}><ChevronUp size={20} /></TraySlot>
        <TraySlot $width={38}><CloudOff /></TraySlot>
        <TraySlot $width={62}>
          ENG
          <br />
          US
        </TraySlot>
        <TraySlot $width={30}><Wifi size={20} /></TraySlot>
        <TraySlot $width={28}><Volume2 size={19} /></TraySlot>
        <TraySlot $width={34}><BatteryIcon /></TraySlot>
        <Clock>
          11:39
          <br />
          17-01-2024
        </Clock>
        <TraySlot $width={40}><Bell size={19} fill="#a8e4ff" color="#a8e4ff" /></TraySlot>
      </Tray>
    </Taskbar>

    <CheckPill>
      <svg width="24" height="20" viewBox="0 0 24 20" fill="none" stroke="currentColor" strokeWidth="2">
        <path d="M2 11 L9 17 L22 3" />
      </svg>
    </CheckPill>

    <Modal>
      <CloseButton><X size={28} strokeWidth={2} /></CloseButton>
      <ModalTitle>ARE YOU SURE?</ModalTitle>
      <ModalBody>
        Make sure you&apos;ve added all intended team members before submitting your team for review. Team applications once submitted, can&apos;t be withdrawn.
      </ModalBody>
      <ModalActions>
        <ModalButton>No</ModalButton>
        <ModalButton $primary>Yes</ModalButton>
      </ModalActions>
    </Modal>
  </Screen>
);

export default App;
